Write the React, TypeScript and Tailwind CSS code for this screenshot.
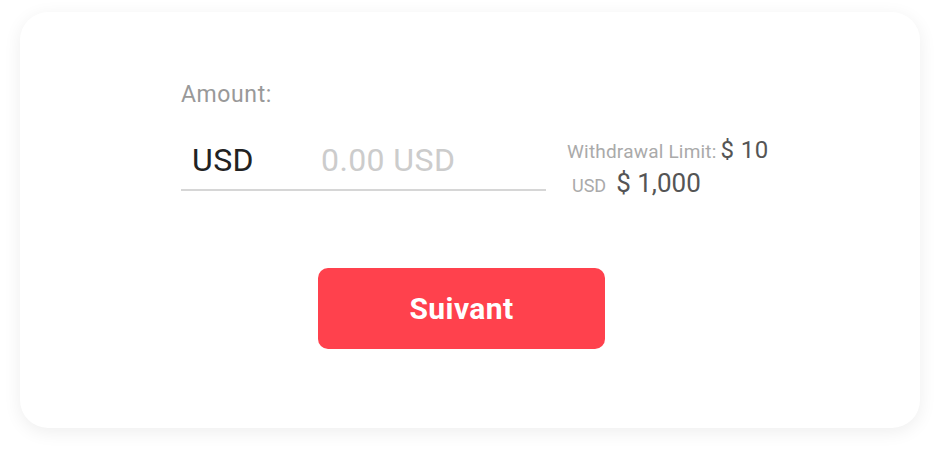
export default function App() {
  return (
    <div className="w-[940px] h-[456px] bg-white px-5 pt-3 pb-7" style={{ fontFamily: 'Roboto, "Noto Sans", sans-serif' }}>
      <div className="h-full rounded-[28px] bg-white shadow-[0_4px_18px_rgba(0,0,0,0.07)] pl-[161px] pt-[69px]">
        <div className="text-[23px] leading-[28px] tracking-[0.6px] text-[#999999]">Amount:</div>

        <div className="mt-[31px] flex items-start">
          <div className="w-[365px] border-b-2 border-[#d6d6d6] flex items-start pb-[9px]">
            <span className="ml-[11px] w-[129px] text-[32px] leading-[40px] tracking-[0.4px] text-[#222222]">USD</span>
            <span className="text-[32px] leading-[40px] tracking-[0.4px] text-[#cccccc]">0.00 USD</span>
          </div>
          <div className="ml-[21px] mt-[-2px] flex flex-col">
            <div className="flex items-baseline gap-[4px] h-[24px] leading-[24px]">
              <span className="text-[19px] tracking-[0.2px] text-[#aaaaaa]">Withdrawal Limit:</span>
              <span className="text-[24px] tracking-[0.4px] text-[#555555]">$ 10</span>
            </div>
            <div className="mt-[4px] flex items-baseline gap-[10px] ml-[5px] h-[34px] leading-[34px]">
              <span className="text-[18px] text-[#aaaaaa]">USD</span>
              <span className="text-[26px] text-[#555555]">$ 1,000</span>
            </div>
          </div>
        </div>

        <button className="mt-[68px] ml-[137px] w-[287px] h-[81px] rounded-[10px] bg-[#ff414d] text-white text-[30px] font-bold tracking-[0.4px]">
          Suivant
        </button>
      </div>
    </div>
  );
}
